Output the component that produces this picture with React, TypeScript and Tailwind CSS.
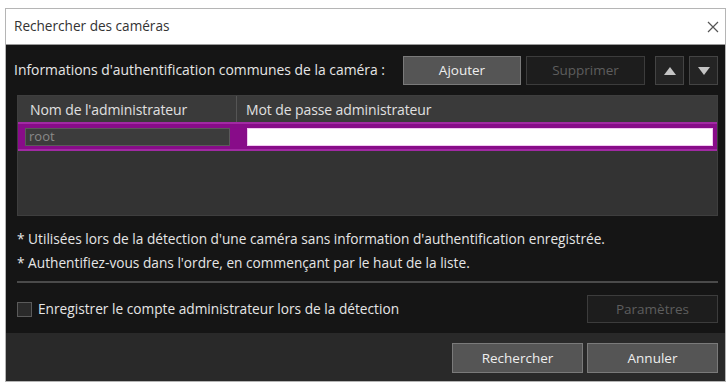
import React from "react";

const FONT = { fontFamily: '"Open Sans", "Noto Sans", sans-serif' };

function Btn({
  children,
  dim,
  className = "",
}: {
  children: React.ReactNode;
  dim?: boolean;
  className?: string;
}) {
  return (
    <button
      type="button"
      className={`flex items-center justify-center border text-[13.5px] ${
        dim
          ? "border-[#3c3c3c] bg-[#1d1d1d] text-[#5e5e5e]"
          : "border-[#7a7a7a] bg-[#555555] text-[#eeeeee]"
      } ${className}`}
    >
      {children}
    </button>
  );
}

function ArrowBtn({ up }: { up?: boolean }) {
  return (
    <button
      type="button"
      className="flex h-[29px] w-[29px] items-center justify-center border border-[#444444] bg-[#242424]"
    >
      <svg width="14" height="10" viewBox="0 0 14 10">
        <path d={up ? "M7 1 L13 9 L1 9 Z" : "M1 1 L13 1 L7 9 Z"} fill="#c4c4c4" />
      </svg>
    </button>
  );
}

export default function App() {
  return (
    <div className="h-[382px] w-[728px] overflow-hidden bg-white pl-[5px] pt-[8px]" style={FONT}>
      <div className="flex h-[374px] w-[721px] flex-col border border-[#b5b5b5]">
        {/* title bar */}
        <div className="flex h-[36px] shrink-0 items-center justify-between border-b border-[#9a9a9a] bg-white pl-[8px] pr-[6px]">
          <span className="text-[13.6px] text-[#333333]">Rechercher des caméras</span>
          <svg width="12" height="12" viewBox="0 0 12 12">
            <path d="M1 1 L11 11 M11 1 L1 11" stroke="#555555" strokeWidth="1.2" />
          </svg>
        </div>

        {/* body */}
        <div className="flex flex-col bg-[#151515] pl-[11px] pr-[7px]">
          <div className="flex h-[50px] items-center gap-[5px] pt-[1px]">
            <span className="ml-[-3px] flex-1 text-[13.9px] text-[#e6e6e6]">
              Informations d'authentification communes de la caméra :
            </span>
            <Btn className="h-[29px] w-[118px]">Ajouter</Btn>
            <Btn dim className="h-[29px] w-[119px]">
              Supprimer
            </Btn>
            <div className="ml-[5px] flex gap-[5px]">
              <ArrowBtn up />
              <ArrowBtn />
            </div>
          </div>

          {/* table */}
          <div className="flex h-[121px] flex-col border border-[#3e3e3e] bg-[#333333]">
            <div className="flex h-[26px] items-center bg-[#3a3a3a] text-[14px] tracking-[-0.1px] text-[#e0e0e0]">
              <div className="flex h-full w-[219px] items-center border-r border-[#555555] pl-[12px]">
                Nom de l'administrateur
              </div>
              <div className="pl-[9px]">Mot de passe administrateur</div>
            </div>
            <div className="flex h-[29px] items-center gap-[17px] border-y-[2px] border-[#a12aa3] bg-[#880c89] pl-[7px] pr-[4px]">
              <div className="flex h-[18px] w-[205px] items-center border border-[#5a5a5a] bg-[#3c3c3c] pl-[3px] text-[13px] text-[#8a8a8a]">
                root
              </div>
              <div className="h-[18px] flex-1 border border-[#f2c9f2] bg-white" />
            </div>
          </div>

          {/* notes */}
          <div className="flex flex-col gap-[3px] pt-[13px] text-[13.7px] text-[#e6e6e6]">
            <p>* Utilisées lors de la détection d'une caméra sans information d'authentification enregistrée.</p>
            <p>* Authentifiez-vous dans l'ordre, en commençant par le haut de la liste.</p>
          </div>
          <div className="mt-[8px] h-[2px] bg-[#4a4a4a]" />

          <div className="flex h-[50px] items-center justify-between pt-[2px]">
            <label className="flex items-center gap-[6px] text-[13.7px] text-[#e6e6e6]">
              <span className="h-[15px] w-[15px] border border-[#5a5a5a] bg-[#2a2a2a]" />
              Enregistrer le compte administrateur lors de la détection
            </label>
            <Btn dim className="h-[28px] w-[131px]">
              Paramètres
            </Btn>
          </div>
        </div>

        {/* footer */}
        <div className="flex flex-1 items-center justify-end gap-[4px] bg-[#292929] pr-[7px] pt-[2px]">
          <Btn className="h-[30px] w-[131px] border-[#6e6e6e] bg-[#4a4a4a]">Rechercher</Btn>
          <Btn className="h-[30px] w-[131px] border-[#6e6e6e] bg-[#4a4a4a]">Annuler</Btn>
        </div>
      </div>
    </div>
  );
}
